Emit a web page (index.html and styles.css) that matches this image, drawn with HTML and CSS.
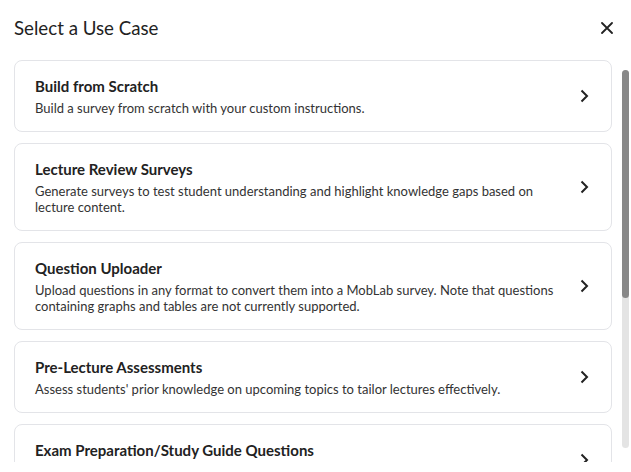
FILE: index.html
```html
<!DOCTYPE html>
<html lang="en">
<head>
    <meta charset="UTF-8">
    <meta name="viewport" content="width=device-width, initial-scale=1.0">
    <title>Select a Use Case</title>
    <link rel="stylesheet" href="styles.css">
</head>
<body>
    <div class="modal">
        <div class="modal-header">
            <h2>Select a Use Case</h2>
            <button class="close-btn" aria-label="Close">
                <svg width="12" height="12" viewBox="0 0 12 12"><path d="M1 1 L11 11 M11 1 L1 11" stroke="#222" stroke-width="1.8" stroke-linecap="round" fill="none"/></svg>
            </button>
        </div>

        <div class="list-wrap">
            <ul class="case-list">
                <li class="case">
                    <div class="case-text">
                        <h3>Build from Scratch</h3>
                        <p>Build a survey from scratch with your custom instructions.</p>
                    </div>
                    <svg class="chevron" width="10" height="14" viewBox="0 0 10 14"><path d="M2.5 1.5 L8 7 L2.5 12.5" stroke="#222" stroke-width="2" fill="none"/></svg>
                </li>
                <li class="case">
                    <div class="case-text">
                        <h3>Lecture Review Surveys</h3>
                        <p>Generate surveys to test student understanding and highlight knowledge gaps based on lecture content.</p>
                    </div>
                    <svg class="chevron" width="10" height="14" viewBox="0 0 10 14"><path d="M2.5 1.5 L8 7 L2.5 12.5" stroke="#222" stroke-width="2" fill="none"/></svg>
                </li>
                <li class="case">
                    <div class="case-text">
                        <h3>Question Uploader</h3>
                        <p>Upload questions in any format to convert them into a MobLab survey. Note that questions containing graphs and tables are not currently supported.</p>
                    </div>
                    <svg class="chevron" width="10" height="14" viewBox="0 0 10 14"><path d="M2.5 1.5 L8 7 L2.5 12.5" stroke="#222" stroke-width="2" fill="none"/></svg>
                </li>
                <li class="case">
                    <div class="case-text">
                        <h3>Pre-Lecture Assessments</h3>
                        <p>Assess students' prior knowledge on upcoming topics to tailor lectures effectively.</p>
                    </div>
                    <svg class="chevron" width="10" height="14" viewBox="0 0 10 14"><path d="M2.5 1.5 L8 7 L2.5 12.5" stroke="#222" stroke-width="2" fill="none"/></svg>
                </li>
                <li class="case">
                    <div class="case-text">
                        <h3>Exam Preparation/Study Guide Questions</h3>
                        <p>Create practice questions that help students review key concepts and prepare for exams.</p>
                    </div>
                    <svg class="chevron" width="10" height="14" viewBox="0 0 10 14"><path d="M2.5 1.5 L8 7 L2.5 12.5" stroke="#222" stroke-width="2" fill="none"/></svg>
                </li>
            </ul>
            <div class="scrollbar"><div class="scroll-thumb"></div></div>
        </div>
    </div>
</body>
</html>
```

FILE: styles.css
```css
* { box-sizing: border-box; }

body {
    margin: 0;
    font-family: 'Lato', 'Noto Sans', sans-serif;
    background: #fff;
    color: #222;
}

.modal {
    height: 472px;
    display: flex;
    flex-direction: column;
    padding-bottom: 10px;
}

.modal-header {
    height: 60px;
    padding: 0 18px 4px 14px;
    display: flex;
    justify-content: space-between;
    align-items: center;
}
.modal-header h2 {
    margin: 0;
    font-size: 18.7px;
    font-weight: 400;
    color: #222;
}
.close-btn {
    background: none;
    border: none;
    padding: 0;
    cursor: pointer;
    display: flex;
}

.list-wrap {
    position: relative;
    flex: 1;
    min-height: 0;
}
.case-list {
    list-style: none;
    margin: 0;
    padding: 0 19px 16px 14px;
    height: 100%;
    overflow: hidden;
    display: flex;
    flex-direction: column;
    gap: 11px;
}

/* drawn scrollbar, sits over the list's right edge */
.scrollbar {
    position: absolute;
    top: 10px;
    bottom: 14px;
    right: 2px;
    width: 7px;
    background: #e4e4e4;
    border-radius: 4px;
}
.scroll-thumb {
    height: 228px;
    background: #888;
    border-radius: 4px;
}

.case {
    flex-shrink: 0;
    border: 1px solid #e3e4e8;
    border-radius: 8px;
    padding: 15px 22px 15px 20px;
    display: flex;
    align-items: center;
    justify-content: space-between;
    cursor: pointer;
}
.case-text { max-width: 520px; }
.case h3 {
    margin: 0 0 4px;
    font-size: 15px;
    line-height: 20px;
    font-weight: 700;
    color: #222;
}
.case p {
    margin: 0;
    font-size: 13px;
    line-height: 16px;
    color: #333;
}
.chevron { flex-shrink: 0; }
```
